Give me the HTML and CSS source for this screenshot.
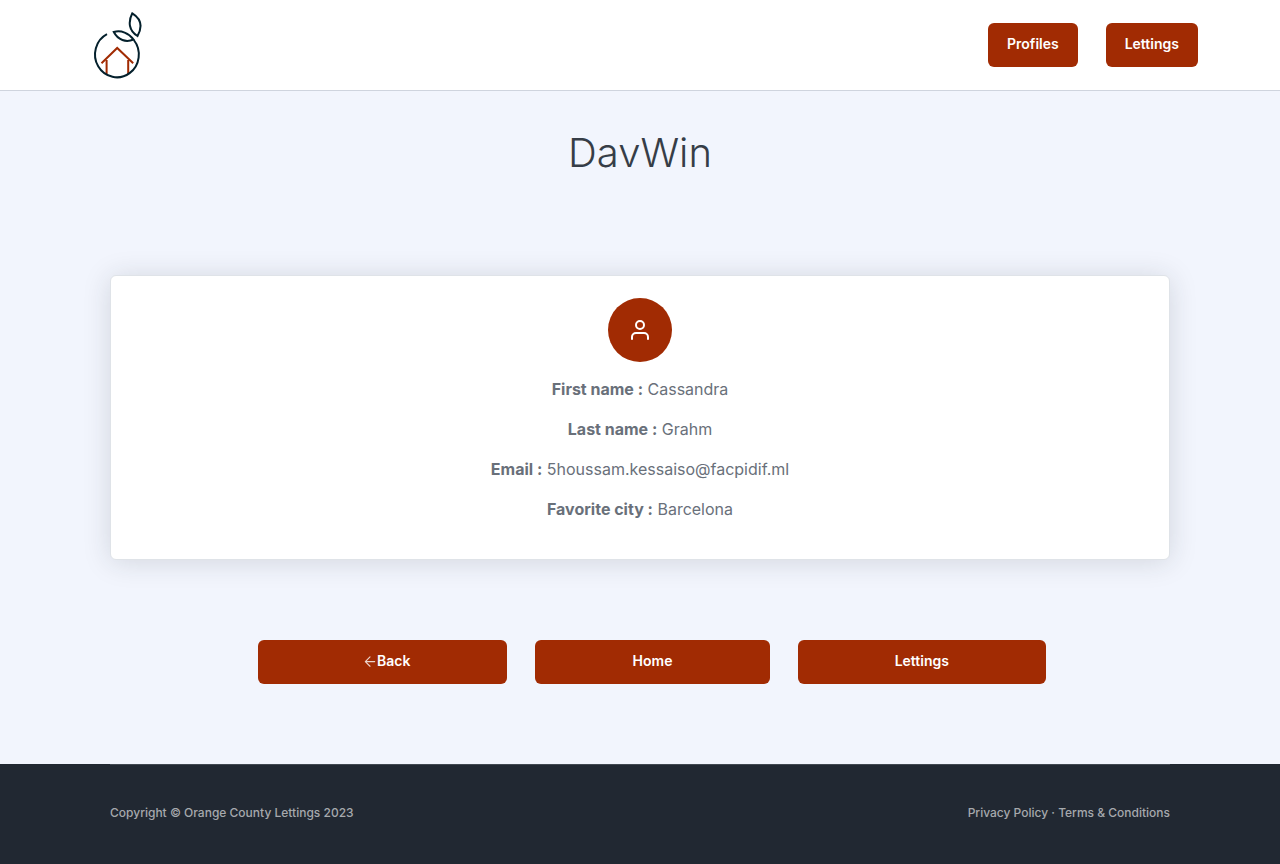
FILE: index.html
```html
<!DOCTYPE html>
<html lang="en">
<head>
<meta charset="utf-8">
<meta name="viewport" content="width=device-width, initial-scale=1">
<title>DavWin</title>
<link rel="stylesheet" href="styles.css">
</head>
<body>
<header class="navbar">
  <a class="brand" href="#" aria-label="Orange County Lettings">
    <svg class="logo" viewBox="0 0 50 70" width="50" height="70" fill="none" stroke-width="2">
      <g stroke="#a12b03">
        <path d="M9.500 53.200L25.200 38L41.200 53.200"/>
        <path d="M14.600 50V64M36.200 50V64"/>
      </g>
      <g stroke="#04202c">
        <path d="M15 24.200A21.900 22.800 0 1 0 41.800 30"/>
        <path d="M21.800 22C29 20 37 23 41.500 29.500C34 32.800 26 30 21.800 22Z"/>
        <path d="M40.300 3.300C49.500 9 50.500 17 45.500 26C37 21 35.800 12 40.300 3.300Z"/>
      </g>
    </svg>
  </a>
  <nav class="nav-links">
    <a class="btn" href="#">Profiles</a>
    <a class="btn" href="#">Lettings</a>
  </nav>
</header>
<main class="main">
  <h1 class="title">DavWin</h1>
  <section class="card">
    <div class="avatar">
      <svg viewBox="0 0 24 24" width="24" height="24" fill="none" stroke="#fff" stroke-width="2" stroke-linecap="round" stroke-linejoin="round" aria-hidden="true">
        <path d="M20 21v-2a4 4 0 0 0-4-4H8a4 4 0 0 0-4 4v2"/>
        <circle cx="12" cy="7" r="4"/>
      </svg>
    </div>
    <p><strong>First name :</strong> Cassandra</p>
    <p><strong>Last name :</strong> Grahm</p>
    <p><strong>Email :</strong> 5houssam.kessaiso@facpidif.ml</p>
    <p><strong>Favorite city :</strong> Barcelona</p>
  </section>
  <nav class="actions">
    <a class="btn" href="#"><svg class="back-icon" viewBox="0 0 24 24" width="14" height="14" fill="none" stroke="#fff" stroke-opacity="0.8" stroke-width="2" stroke-linecap="round" stroke-linejoin="round" aria-hidden="true"><path d="M20 13H4M12 5l-8 8l8 8"/></svg>Back</a>
    <a class="btn" href="#">Home</a>
    <a class="btn" href="#">Lettings</a>
  </nav>
</main>
<footer class="footer">
  <div class="footer-inner">
    <div>Copyright © Orange County Lettings 2023</div>
    <div><a href="#">Privacy Policy</a> · <a href="#">Terms &amp; Conditions</a></div>
  </div>
</footer>
</body>
</html>
```
FILE: styles.css
```css
* { box-sizing: border-box; }
body {
  margin: 0;
  min-height: 100vh;
  display: flex;
  flex-direction: column;
  background: #f2f5fd;
  color: #69707a;
  font: 16px/24px Metropolis, Inter, sans-serif;
}
a { color: inherit; text-decoration: none; }
.navbar {
  display: flex;
  align-items: center;
  justify-content: space-between;
  padding: 10px 82px 10px 92px;
  background: #fff;
  border-bottom: 1px solid #cfd4de;
}
.logo { display: block; }
.nav-links { display: flex; gap: 28px; }
.btn {
  display: flex;
  align-items: center;
  justify-content: center;
  height: 44px;
  padding: 0 19px 2px;
  border-radius: 6px;
  background: #a12b03;
  color: #fff;
  font-size: 14px;
  font-weight: 600;
}
.back-icon { margin-left: 8px; }
.main {
  flex: 1;
  width: 100%;
  max-width: 1140px;
  margin: 0 auto;
  padding: 36px 40px 80px;
}
.title {
  margin: 0 0 96px;
  color: #363d47;
  font-size: 40px;
  line-height: 52px;
  font-weight: 300;
  text-align: center;
}
.card {
  padding: 22px 20px;
  background: #fff;
  border: 1px solid #dfe3e8;
  border-radius: 6px;
  box-shadow: 0 2px 28px rgba(33, 40, 50, 0.15);
  text-align: center;
}
.card p { margin: 0 0 16px; }
.card strong { font-weight: 700; }
.avatar {
  display: flex;
  align-items: center;
  justify-content: center;
  width: 64px;
  height: 64px;
  margin: 0 auto 15px;
  border-radius: 50%;
  background: #a12b03;
}
.actions {
  display: grid;
  grid-template-columns: 249fr 234fr 248fr;
  gap: 28px;
  max-width: 812px;
  margin: 80px auto 0;
  padding-left: 24px;
}
.footer {
  padding: 0 40px;
  background: #212832;
  color: #a6a9ad;
  font-size: 12px;
  font-weight: 500;
  line-height: 20px;
}
.footer-inner {
  display: flex;
  justify-content: space-between;
  gap: 20px;
  max-width: 1060px;
  margin: 0 auto;
  padding: 38px 0 41px;
  border-top: 1px solid #414851;
}
```
